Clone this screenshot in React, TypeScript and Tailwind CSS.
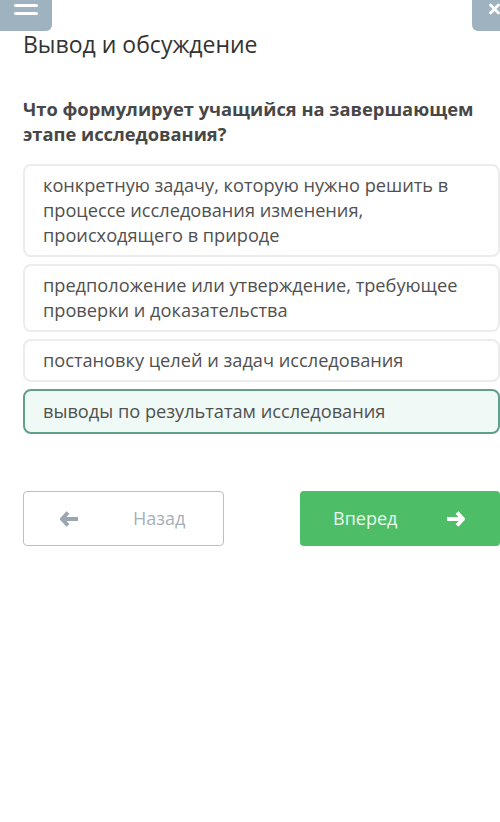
import React from "react";

const options = [
  "конкретную задачу, которую нужно решить в процессе исследования изменения, происходящего в природе",
  "предположение или утверждение, требующее проверки и доказательства",
  "постановку целей и задач исследования",
  "выводы по результатам исследования",
];

const selected = 3;

export default function App() {
  return (
    <div className="relative h-[822px] w-[500px] overflow-hidden bg-white font-['Open_Sans',sans-serif]">
      {/* top bar buttons */}
      <div className="flex justify-between">
        <button className="flex h-[31px] w-[52px] flex-col items-center justify-start gap-[5px] rounded-br-[6px] bg-[#9fb2bf] pt-[4px]">
          <span className="h-[3px] w-[24px] rounded bg-white" />
          <span className="h-[3px] w-[24px] rounded bg-white" />
        </button>
        <button className="flex h-[31px] w-[28px] items-start justify-start rounded-bl-[6px] bg-[#9fb2bf] pl-[17px] pt-[2px]">
          <svg width="14" height="14" viewBox="0 0 14 14">
            <path d="M2 2 L12 12 M12 2 L2 12" stroke="white" strokeWidth="3.5" strokeLinecap="round" />
          </svg>
        </button>
      </div>

      <div className="pl-[23px]">
        <h1 className="mt-[-2px] text-[23px] leading-[30px] text-[#333]">Вывод и обсуждение</h1>

        <p className="mt-[37px] w-[470px] text-[18.3px] font-bold leading-[25px] text-[#474747]">
          Что формулирует учащийся на завершающем этапе исследования?
        </p>

        <div className="mt-[18px] flex w-[477px] flex-col gap-[7px]">
          {options.map((text, i) => (
            <div
              key={i}
              className={
                i === selected
                  ? "rounded-[8px] border-2 border-[#5f9f8c] bg-[#effaf6] px-[18px] py-[8px] text-[18.2px] leading-[25px] text-[#505050]"
                  : "rounded-[8px] border-2 border-[#ececec] bg-white px-[18px] py-[7px] text-[18.2px] leading-[25px] text-[#505050]"
              }
            >
              {text}
            </div>
          ))}
        </div>

        <div className="mt-[57px] flex w-[477px] justify-between">
          <button className="flex h-[55px] w-[201px] items-center rounded-[4px] border border-[#b8c0c6] bg-white pl-[36px] text-[18px] text-[#a6b0b8]">
            <svg width="20" height="16" viewBox="0 0 20 16">
              <path d="M8 1.5 L2 8 L8 14.5 M2.5 8 H18" stroke="#9aa7b1" strokeWidth="4" fill="none" strokeLinejoin="round" />
            </svg>
            <span className="ml-[53px]">Назад</span>
          </button>
          <button className="flex h-[55px] w-[200px] items-center rounded-[4px] bg-[#4dbe67] pl-[33px] text-[18px] text-[#eaf8ee]">
            <span>Вперед</span>
            <svg className="ml-[48px]" width="20" height="16" viewBox="0 0 20 16">
              <path d="M12 1.5 L18 8 L12 14.5 M17.5 8 H2" stroke="white" strokeWidth="4" fill="none" strokeLinejoin="round" />
            </svg>
          </button>
        </div>
      </div>
    </div>
  );
}
